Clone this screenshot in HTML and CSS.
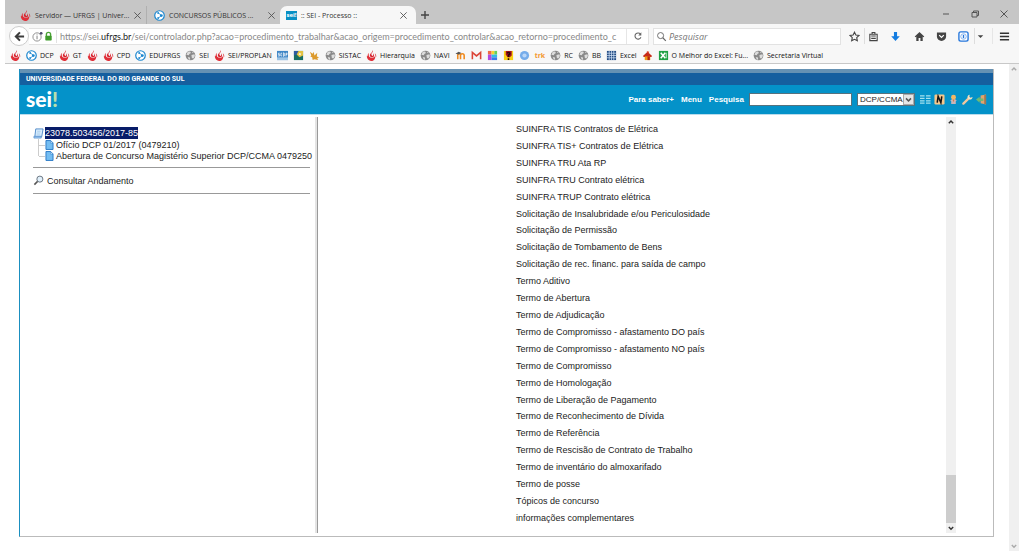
FILE: index.html
```html
<!DOCTYPE html>
<html lang="pt-BR">
<head>
<meta charset="utf-8">
<title>:: SEI - Processo ::</title>
<link rel="stylesheet" href="styles.css">
</head>
<body>
<svg class="defs" aria-hidden="true">
  <symbol id="flame" viewBox="0 0 12 12"><path d="M7.500 0c.8 2-.8 2.600-1.400 3.600S6 6 7.200 6.500c1-.6 1-2 .7-3 1 1 1.300 2.700.4 3.800C7 8.600 4.300 7.900 4.200 6 4.100 3.700 7 3 7.500 0z" fill="#d8232e"/><path d="M2.400 3.200C3.500 4 2.500 6 3.600 7.300 5 9 8.300 8.800 9.500 6.700c1.200 2-.3 5.200-3.700 5.200C2.200 11.900.4 8.500 1.100 5.800l1 1.400c-.3-1.400-.2-2.800.3-4z" fill="#e02f38"/><path d="M9.600 3.500c1.600 1.300 2 3.300 1.100 5-.2-1.800-.5-3-1.100-5z" fill="#d8232e"/></symbol>
  <symbol id="hub" viewBox="0 0 12 12"><circle cx="6" cy="6" r="5.200" fill="#fff" stroke="#1c87cf" stroke-width="1.300"/><path d="M4.500 3l3.800 3-3.800 3" fill="none" stroke="#3597d8"/><circle cx="4.500" cy="3.300" r="1" fill="#1c87cf"/><circle cx="8" cy="6" r="1.500" fill="#1c87cf"/><circle cx="4.500" cy="8.700" r="1" fill="#1c87cf"/></symbol>
  <symbol id="globe" viewBox="0 0 12 12"><circle cx="6" cy="6" r="5.300" fill="#8a8a8a"/><path d="M3 2l2.500-.4 1 1.600-1.700 1.200-.6 1.400L1.500 5.300zM7 5.500l3.300-1 .5 2-1.600 2.700-1.700-.6zM3 7.500l2.400.8.2 2-1.400.2zM8 1.600l1.600 1.300L8 3.400z" fill="#ddd"/></symbol>
  <symbol id="close" viewBox="0 0 10 10"><path d="M1.500 1.500l7 7m0-7l-7 7" fill="none" stroke="currentColor"/></symbol>
  <symbol id="up" viewBox="0 0 8 8"><path d="M1.800 5.300L4 3l2.200 2.300" fill="none" stroke="currentColor" stroke-width="1.400"/></symbol>
  <symbol id="down" viewBox="0 0 8 8"><path d="M1.800 3L4 5.300 6.200 3" fill="none" stroke="currentColor" stroke-width="1.400"/></symbol>
  <symbol id="doc" viewBox="0 0 9 11"><path d="M.6.6h5.200l2.600 2.600v7.200H.6z" fill="#74bdf2" stroke="#2676c4"/><path d="M5.700.8v2.600h2.600z" fill="#e6f5ff" stroke="#2676c4" stroke-width=".5"/></symbol>
</svg>

<div class="window">
  <header class="tabs">
    <div class="tab tab-first"><svg class="ico"><use href="#flame"/></svg><span class="tab-title">Servidor — UFRGS | Univer...</span><button class="tab-close" aria-label="Fechar aba"><svg><use href="#close"/></svg></button></div>
    <div class="tab"><svg class="ico"><use href="#hub"/></svg><span class="tab-title">CONCURSOS PÚBLICOS ...</span><button class="tab-close" aria-label="Fechar aba"><svg><use href="#close"/></svg></button></div>
    <div class="tab tab-active"><span class="mini-sei">sei!</span><span class="tab-title">:: SEI - Processo ::</span><button class="tab-close" aria-label="Fechar aba"><svg><use href="#close"/></svg></button></div>
    <button class="tab-new" aria-label="Nova aba"><svg viewBox="0 0 10 10"><path d="M5 1v8M1 5h8" stroke="#444" stroke-width="1.400"/></svg></button>
    <div class="win-buttons">
      <button aria-label="Minimizar"><svg viewBox="0 0 10 10"><path d="M2 5h6" stroke="currentColor"/></svg></button>
      <button aria-label="Restaurar"><svg viewBox="0 0 10 10"><path d="M2 3.500h5v4.500H2zM3.500 3.500V2H8.500v4.500H7" fill="none" stroke="currentColor"/></svg></button>
      <button aria-label="Fechar"><svg><use href="#close"/></svg></button>
    </div>
  </header>

  <div class="toolbar">
    <button class="back" aria-label="Voltar"><svg viewBox="0 0 12 12"><path d="M6.500 1.500L2 6l4.500 4.500M2.500 6H11" fill="none" stroke="#3c3c3c" stroke-width="2.200"/></svg></button>
    <div class="address">
      <svg class="ico" viewBox="0 0 12 12"><circle cx="5.500" cy="6.500" r="4.500" fill="none" stroke="#888"/><path d="M5.500 5.500v3.500M5.500 3.800v1" stroke="#777"/><circle cx="10" cy="2.500" r="1.500" fill="#4b4b6b"/></svg>
      <svg class="ico lock" viewBox="0 0 12 12"><path d="M3.700 6V3.800a2.300 2.300 0 014.600 0V6" fill="none" stroke="#4aa235" stroke-width="1.500"/><rect x="2.500" y="5.300" width="7" height="5" rx=".8" fill="#3f9b2b"/></svg>
      <span class="url">https://sei.<b>ufrgs.br</b>/sei/controlador.php?acao=procedimento_trabalhar&amp;acao_origem=procedimento_controlar&amp;acao_retorno=procedimento_c</span>
      <button class="reload" aria-label="Recarregar"><svg viewBox="0 0 12 12"><path d="M9 3.700A3.700 3.700 0 109.500 7.500" fill="none" stroke="#666" stroke-width="1.300"/><path d="M10 1.500v3.800H6.300z" fill="#666"/></svg></button>
    </div>
    <div class="search">
      <svg class="ico" viewBox="0 0 12 12"><circle cx="5" cy="5" r="3.300" fill="none" stroke="#666"/><path d="M7.400 7.400l3.300 3.300" stroke="#666" stroke-width="1.300"/></svg>
      <input type="text" placeholder="Pesquisar" aria-label="Pesquisar na web">
    </div>
    <div class="tools">
      <button aria-label="Favoritar"><svg viewBox="0 0 12 12"><path d="M6 1.300l1.500 3.100 3.400.4-2.500 2.400.7 3.400L6 9l-3.100 1.600.7-3.400L1.100 4.800l3.400-.4z" fill="none" stroke="#444" stroke-width="1.200"/></svg></button>
      <button class="divided" aria-label="Biblioteca"><svg viewBox="0 0 12 12"><path d="M2 3.500h8v7H2zM4.500 3.300V1.700h3v1.600M3.500 5.500h5M3.500 8h5" fill="none" stroke="#444" stroke-width="1.200"/></svg></button>
      <button aria-label="Downloads"><svg viewBox="0 0 12 12"><path d="M4.300 1h3.400v4.700h3L6 11 1.300 5.700h3z" fill="#147ce0"/></svg></button>
      <button aria-label="Início"><svg viewBox="0 0 12 12"><path d="M6 1l5.200 5-.8.800L9.500 6v5H7V7.500H5V11H2.500V6l-.9.800L.8 6z" fill="#444"/></svg></button>
      <button aria-label="Pocket"><svg viewBox="0 0 12 12"><path d="M1 1.500h10V6a5 4.800 0 01-10 0z" fill="#444"/><path d="M3.500 4.500L6 7l2.500-2.500" fill="none" stroke="#fff" stroke-width="1.300"/></svg></button>
      <button aria-label="Extensão"><svg viewBox="0 0 12 12"><rect x="1" y="1" width="10" height="10" rx="2" fill="#fff" stroke="#2677dc" stroke-width="1.500"/><circle cx="6" cy="6" r="3" fill="none" stroke="#7fb0ee"/><path d="M6 4.200v3.600" stroke="#2677dc" stroke-width="1.500"/></svg></button>
      <button class="caret divided" aria-label="Mais opções"><svg viewBox="0 0 12 12"><path d="M3 4.500h6L6 7.500z" fill="#444"/></svg></button>
      <button class="menu" aria-label="Abrir menu"><svg viewBox="0 0 12 12"><path d="M1 2.500h10M1 6h10M1 9.500h10" stroke="#333" stroke-width="1.700"/></svg></button>
    </div>
  </div>

  <nav class="bookmarks" aria-label="Favoritos">
    <a href="#" aria-label="UFRGS"><svg class="ico"><use href="#flame"/></svg></a>
    <a href="#"><svg class="ico"><use href="#hub"/></svg>DCP</a>
    <a href="#"><svg class="ico"><use href="#flame"/></svg>GT</a>
    <a href="#" aria-label="UFRGS"><svg class="ico"><use href="#flame"/></svg></a>
    <a href="#"><svg class="ico"><use href="#flame"/></svg>CPD</a>
    <a href="#"><svg class="ico"><use href="#hub"/></svg>EDUFRGS</a>
    <a href="#"><svg class="ico"><use href="#globe"/></svg>SEI</a>
    <a href="#"><svg class="ico"><use href="#flame"/></svg>SEI/PROPLAN</a>
    <a href="#" aria-label="SCDP"><svg class="ico" viewBox="0 0 12 12"><path d="M0 1h12v10H0z" fill="#3f86c6"/><path d="M0 8h12v3H0z" fill="#9cc4e6"/><path d="M3 3.500H1.500V5H3v1.500H1M5.500 3.500H4.300v3h1.200M7 3v4l1-.5V3.500zM9.800 7V3.500H11V5H9.800" fill="none" stroke="#fff" stroke-width=".8"/></svg></a>
    <a href="#" aria-label="Portal"><svg class="ico" viewBox="0 0 12 12"><rect x="1" y="1" width="10" height="10" fill="#176d63"/><path d="M1 1h5v3L1 6z" fill="#2d5aa2"/><path d="M6 1h5v5L7 8 4 5z" fill="#e3c13f"/><path d="M7 3l2 1-1 2-2-1z" fill="#f7f4d1"/></svg></a>
    <a href="#" aria-label="Brasão"><svg class="ico" viewBox="0 0 12 12"><path d="M1 2l3 2 1-2 1 4 3-3-.5 4 2.500 1-2 1 1 2-4-1-2 1-.5-3-2-1 1-1z" fill="#dc9a2c"/></svg></a>
    <a href="#"><svg class="ico"><use href="#globe"/></svg>SISTAC</a>
    <a href="#"><svg class="ico"><use href="#flame"/></svg>Hierarquia</a>
    <a href="#"><svg class="ico"><use href="#globe"/></svg>NAVI</a>
    <a href="#" aria-label="Moodle"><svg class="ico" viewBox="0 0 12 12"><path d="M3 10V5.500q0-1.500 1.500-1.500T6 5.500V10M6 6q0-2 2-2t2 2v4" fill="none" stroke="#f08a1d" stroke-width="1.700"/><path d="M.5 4L4 2l3 1.200L4 4.800z" fill="#555"/></svg></a>
    <a href="#" aria-label="Gmail"><svg class="ico" viewBox="0 0 12 12"><path d="M1.500 10V2.700L6 6.500l4.500-3.800V10" fill="none" stroke="#db4437" stroke-width="1.700"/></svg></a>
    <a href="#" aria-label="Cores"><svg class="ico" viewBox="0 0 12 12"><path d="M1 1h4v4H1z" fill="#ef6a45"/><path d="M5 1h3v4H5z" fill="#f7d32f"/><path d="M8 1h3v4H8z" fill="#69ce5a"/><path d="M1 5h4v6H1z" fill="#b24ae0"/><path d="M5 5h6v3H5z" fill="#31bce6"/><path d="M5 8h6v3H5z" fill="#3b7ae8"/></svg></a>
    <a href="#" aria-label="Ajuda"><svg class="ico" viewBox="0 0 12 12"><path d="M1 1h10v10H1z" fill="#f9cf13"/><path d="M3 1h6.500v5L7.500 8H5L3 5z" fill="#a90f1b"/><path d="M4.500 3.500Q6 2 7.500 3.500 7.500 5 6 5.500v2M6 9v2" fill="none" stroke="#280b0b" stroke-width="1.700"/></svg></a>
    <a href="#" aria-label="Disco"><svg class="ico" viewBox="0 0 12 12"><circle cx="6" cy="6" r="5" fill="#75acea"/><circle cx="6" cy="6" r="2.300" fill="#b9d6f8"/></svg></a>
    <a href="#" aria-label="trk"><span class="trk">trk</span></a>
    <a href="#"><svg class="ico"><use href="#globe"/></svg>RC</a>
    <a href="#"><svg class="ico"><use href="#globe"/></svg>BB</a>
    <a href="#"><svg class="ico" viewBox="0 0 12 12"><path d="M1 1h10v10H1z" fill="#224b83"/><path d="M3.500 1v10M6 1v10M8.500 1v10M1 3.500h10M1 6h10M1 8.500h10" stroke="#cde0f6" stroke-width=".8"/></svg>Excel</a>
    <a href="#" aria-label="Casa"><svg class="ico" viewBox="0 0 12 12"><path d="M1 6.500L6 2l5 4.500-1 1H2z" fill="#c62919"/><path d="M3 7h6v4H3z" fill="#ef9a18"/><path d="M6 7h2.500v4H6z" fill="#b3240f"/><path d="M5 1l3 1-1 2z" fill="#e2482e"/></svg></a>
    <a href="#"><svg class="ico" viewBox="0 0 12 12"><path d="M1 1h10v10H1z" fill="#1fa044"/><path d="M3 3l5 6M8 3L3 9" stroke="#fff" stroke-width="1.700"/><path d="M9 3v6" stroke="#caf0d1"/></svg>O Melhor do Excel: Fu...</a>
    <a href="#"><svg class="ico"><use href="#globe"/></svg>Secretaria Virtual</a>
  </nav>

  <div class="viewport">
    <div class="page">
      <div class="org">UNIVERSIDADE FEDERAL DO RIO GRANDE DO SUL</div>
      <div class="bar">
        <div class="logo">sei<span>!</span></div>
        <div class="actions">
          <div class="links">
            <a href="#">Para saber+</a>
            <a href="#">Menu</a>
            <label for="q">Pesquisa</label>
          </div>
          <input id="q" type="text">
          <div class="unit">
            <select aria-label="Unidade"><option>DCP/CCMA</option></select>
            <svg><use href="#down"/></svg>
          </div>
          <div class="icons">
            <a href="#" aria-label="Controle de processos"><svg viewBox="0 0 12 12"><path d="M0 2h5M0 4.700h5M0 7.400h5M0 10h5M6.500 2h5M6.500 4.700h5M6.500 7.400h5M6.500 10h5" stroke="#a5e2ee" stroke-width="1.300"/></svg></a>
            <a href="#" aria-label="Novidades"><svg viewBox="0 0 12 12"><rect x=".5" y=".5" width="11" height="11" rx="1.500" fill="#f6c78b"/><path d="M3.500 9.500l1-7 3 7 1-7" fill="none" stroke="#141414" stroke-width="1.700"/></svg></a>
            <a href="#" aria-label="Usuário"><svg viewBox="0 0 12 12"><path d="M3.500 11V8l-1-1 2-1.500h3L9.500 7l-1 1v3z" fill="#c9b5b8"/><circle cx="6" cy="3.500" r="2.700" fill="#f2b765"/><path d="M5 6h2l-1 3z" fill="#db7b44"/></svg></a>
            <a href="#" aria-label="Configurações"><svg viewBox="0 0 12 12"><path d="M1.500 10.500l5.500-5.500" stroke="#f2c79d" stroke-width="2.500" stroke-linecap="round"/><path d="M8.500.8L8 3l1.200 1 2.300-.7c0 2-1.600 3.200-3.700 2.700L6 4.200C5.700 2.300 6.700 1 8.500.8z" fill="#f6dfbf"/></svg></a>
            <a href="#" aria-label="Sair"><svg viewBox="0 0 12 12"><path d="M5 1.500l6-1v11L5 10z" fill="#e0a56d"/><path d="M9 1l2-.5v11L9 11z" fill="#9d7656"/><path d="M0 6l4-3v2h4v2.500H4v2z" fill="#71ba72"/></svg></a>
          </div>
        </div>
      </div>
      <div class="content">
        <aside class="tree">
          <a class="root" href="#"><svg viewBox="0 0 12 12"><path d="M3 1h8L9.500 9.500H2z" fill="#d9efff" stroke="#4d87c6"/><path d="M1 9h8v2H1z" fill="#9ec9f2" stroke="#4d87c6" stroke-width=".7"/><path d="M4.500 3.500h4M4 5.500h4M4 7.500h4" stroke="#95bce1" stroke-width=".7"/></svg><span>23078.503456/2017-85</span></a>
          <ul>
            <li><a href="#"><svg><use href="#doc"/></svg>Ofício DCP 01/2017 (0479210)</a></li>
            <li><a href="#"><svg><use href="#doc"/></svg>Abertura de Concurso Magistério Superior DCP/CCMA 0479250</a></li>
          </ul>
          <a class="consult" href="#"><svg viewBox="0 0 12 12"><circle cx="7.500" cy="4.500" r="3.300" fill="#e1f0fb" stroke="#626d79"/><path d="M5 7L1.500 10.500" stroke="#555" stroke-width="1.700"/></svg>Consultar Andamento</a>
        </aside>
        <main class="types">
          <ul>
            <li><a href="#">SUINFRA TIS Contratos de Elétrica</a></li>
            <li><a href="#">SUINFRA TIS+ Contratos de Elétrica</a></li>
            <li><a href="#">SUINFRA TRU Ata RP</a></li>
            <li><a href="#">SUINFRA TRU Contrato elétrica</a></li>
            <li><a href="#">SUINFRA TRUP Contrato elétrica</a></li>
            <li><a href="#">Solicitação de Insalubridade e/ou Periculosidade</a></li>
            <li><a href="#">Solicitação de Permissão</a></li>
            <li><a href="#">Solicitação de Tombamento de Bens</a></li>
            <li><a href="#">Solicitação de rec. financ. para saída de campo</a></li>
            <li><a href="#">Termo Aditivo</a></li>
            <li><a href="#">Termo de Abertura</a></li>
            <li><a href="#">Termo de Adjudicação</a></li>
            <li><a href="#">Termo de Compromisso - afastamento DO país</a></li>
            <li><a href="#">Termo de Compromisso - afastamento NO país</a></li>
            <li><a href="#">Termo de Compromisso</a></li>
            <li><a href="#">Termo de Homologação</a></li>
            <li><a href="#">Termo de Liberação de Pagamento</a></li>
            <li><a href="#">Termo de Reconhecimento de Dívida</a></li>
            <li><a href="#">Termo de Referência</a></li>
            <li><a href="#">Termo de Rescisão de Contrato de Trabalho</a></li>
            <li><a href="#">Termo de inventário do almoxarifado</a></li>
            <li><a href="#">Termo de posse</a></li>
            <li><a href="#">Tópicos de concurso</a></li>
            <li><a href="#">informações complementares</a></li>
          </ul>
        </main>
        <div class="scroll"><svg><use href="#up"/></svg><div class="track"><div class="thumb"></div></div><svg><use href="#down"/></svg></div>
      </div>
    </div>
    <div class="scroll scroll-idle"><svg><use href="#up"/></svg><div class="track"></div><svg><use href="#down"/></svg></div>
  </div>
</div>
</body>
</html>
```

FILE: styles.css
```css
* { box-sizing: border-box; }
body { margin: 0; background: #fff; color: #222; font-family: "Liberation Sans", Arial, sans-serif; font-size: 9px; }
a { color: inherit; text-decoration: none; }
button { display: flex; align-items: center; justify-content: center; padding: 0; border: 0; background: none; color: #555; flex: none; }
ul { list-style: none; margin: 0; padding: 0; }
svg { display: block; flex: none; }
.defs { position: absolute; width: 0; height: 0; }
.ico { width: 11px; height: 11px; }

.window { display: flex; flex-direction: column; min-height: 100vh; padding: 0 5px 4px; }
.tabs, .bookmarks { font-family: "Open Sans", "Noto Sans", sans-serif; font-size: 7px; }

/* Tab strip */
.tabs { display: flex; height: 24px; padding-left: 7px; background: #c6c6c6; color: #333; }
.tab { display: flex; align-items: center; gap: 4px; width: 134px; margin-top: 6px; padding: 0 4px 0 7px; border-left: 1px solid #b0b0b0; white-space: nowrap; }
.tab-first { padding-right: 6px; border-left-color: transparent; }
.tab-title { flex: 1; }
.tab-close svg { width: 9px; height: 9px; }
.tab-active { width: 136px; padding: 0 8px 0 6px; border: 0; border-radius: 7px 7px 0 0; background: #f7f7f7; }
.mini-sei { width: 11px; background: #078fc4; color: #fff; font-size: 6px; font-weight: bold; line-height: 9px; text-align: center; }
.tab-new { width: 18px; margin: 6px 0 0; }
.tab-new svg { width: 10px; height: 10px; }
.win-buttons { display: flex; gap: 19px; margin: 4px 10px 0 auto; }
.win-buttons svg { width: 10px; height: 10px; }

/* Navigation bar */
.toolbar { display: flex; align-items: center; height: 24px; padding: 0 3px 0 4px; background: #f7f7f7; font-family: Lato, "Noto Sans", sans-serif; font-size: 9px; color: #888; }
.back { width: 20px; height: 20px; border: 1px solid #ccc; border-radius: 50%; background: #fff; }
.back svg { width: 11px; height: 11px; }
.address { display: flex; align-items: center; flex: 1; min-width: 0; height: 17px; padding-left: 3px; border: 1px solid #e2e2e2; border-left: 0; background: #fff; }
.lock { margin-right: 2px; }
.url { flex: 1; min-width: 0; padding-left: 3px; border-left: 1px solid #e2e2e2; white-space: nowrap; line-height: 13px; }
.url b { color: #222; font-weight: normal; }
.reload { width: 22px; height: 15px; border-left: 1px solid #e6e6e6; }
.reload svg { width: 10px; height: 10px; }
.search { display: flex; align-items: center; gap: 2px; width: 188px; height: 17px; margin-left: 4px; padding-left: 2px; border: 1px solid #e2e2e2; background: #fff; }
.search input { width: 100%; min-width: 0; padding: 0; border: 0; background: none; font: italic 9px "Open Sans", sans-serif; }
.search input::placeholder { color: #777; }
.tools { display: flex; align-items: center; margin-left: 3px; }
.tools button { width: 22px; height: 16px; }
.tools svg { width: 11px; height: 11px; }
.tools .divided { width: 18px; border-left: 1px solid #ddd; }
.tools button:nth-child(1) { width: 20px; }
.tools button:nth-child(3) { width: 26px; }
.tools .caret { width: 12px; }
.tools .menu { width: 24px; margin-left: 6px; border-left: 1px solid #e6e6e6; }

/* Bookmarks bar */
.bookmarks { display: flex; align-items: center; gap: 5px; height: 16px; padding-left: 5px; border-bottom: 1px solid #c8c8c8; background: #f7f7f7; color: #111; white-space: nowrap; }
.bookmarks a { display: flex; align-items: center; gap: 3px; }
.trk { color: #f39a31; font-weight: bold; }

/* Page */
.viewport { display: flex; flex: 1; }
.page { display: flex; flex-direction: column; flex: 1; margin: 5px 15px 14px 14px; border: solid #bbb; border-width: 0 1px 1px; border-left-color: #1a8fc0; }
.org { padding-left: 6px; border-top: 4px solid #6591b3; background: #155f9f; color: #fff; font-family: Roboto, sans-serif; font-size: 7px; font-weight: bold; line-height: 12px; }
.bar { display: flex; align-items: center; justify-content: space-between; height: 29px; padding: 0 6px; background: #0492c9; color: #fff; font-size: 8px; font-weight: bold; }
.logo { margin-bottom: 2px; font: 900 21px/24px Lato, sans-serif; }
.logo span { color: #b7dfae; }
.actions, .links, .icons { display: flex; align-items: center; }
.actions { gap: 5px; }
.links { gap: 7px; }
.icons { gap: 3px; }
.icons svg { width: 11px; height: 11px; }
.actions input { width: 103px; height: 13px; padding: 0 2px; border: 1px solid #56727e; background: #fff; font: 8px "Liberation Sans", sans-serif; }
.unit { display: flex; position: relative; }
.unit select { appearance: none; width: 58px; height: 13px; padding: 0 0 0 2px; border: 1px solid #56727e; border-radius: 0; background: #fff; color: #222; font: 8px "Liberation Sans", sans-serif; }
.unit svg { position: absolute; right: 1px; top: 1px; width: 11px; height: 11px; border: 1px solid #aaa; background: #e6e6e6; color: #555; pointer-events: none; }
.content { display: flex; flex: 1; padding: 2px 37px 3px 0; border-top: 1px solid #b9dcec; }

.tree { width: 298px; padding: 10px 7px 0 13px; border-right: 1px solid #999; box-shadow: inset -2px 0 #e4e4e4; white-space: nowrap; }
.root { display: flex; align-items: center; gap: 1px; height: 12px; }
.root svg { width: 11px; height: 11px; }
.root span { background: #081c68; color: #fff; line-height: 12px; }
.tree ul { margin-left: 5px; }
.tree li { position: relative; padding-left: 6px; border-left: 1px solid #ccc; }
.tree li::before { content: ""; position: absolute; left: 0; top: 6px; width: 6px; border-top: 1px solid #ccc; }
.tree li:last-child { border-left-color: transparent; }
.tree li:last-child::after { content: ""; position: absolute; left: -1px; top: 0; height: 6px; border-left: 1px solid #ccc; }
.tree li a { display: flex; align-items: center; gap: 2px; height: 11px; }
.tree li svg { width: 9px; height: 10px; }
.consult { display: flex; align-items: center; gap: 3px; height: 27px; margin-top: 6px; border: solid #999; border-width: 1px 0; }
.consult svg { width: 11px; height: 11px; }

.types { display: flex; flex: 1; padding: 6px 0 8px 198px; }
.types ul { display: flex; flex-direction: column; justify-content: space-between; line-height: 13px; }

/* Scroll bars */
.scroll { display: flex; flex-direction: column; align-items: center; width: 10px; background: #f0f0f0; color: #333; }
.scroll svg { width: 8px; height: 10px; }
.track { display: flex; flex: 1; align-items: flex-end; width: 100%; }
.thumb { width: 100%; height: 12%; background: #cdcdcd; }
.scroll-idle { color: #aaa; }
```
